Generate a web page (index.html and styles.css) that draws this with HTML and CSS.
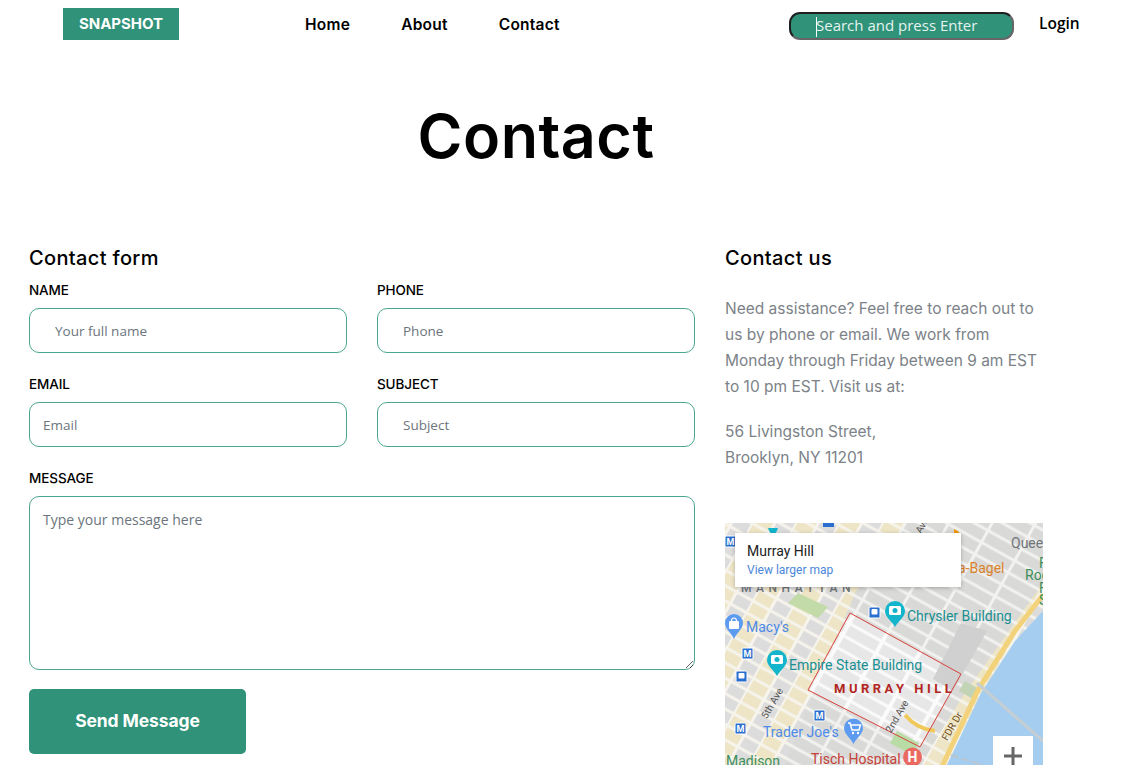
FILE: index.html
```html
<!DOCTYPE html>
<html lang="en">
<head>
<meta charset="utf-8">
<title>Contact - Snapshot</title>
<link rel="stylesheet" href="styles.css">
</head>
<body>
<header class="topbar">
  <a class="logo" href="#">SNAPSHOT</a>
  <nav class="menu">
    <a href="#">Home</a>
    <a href="#">About</a>
    <a href="#">Contact</a>
  </nav>
  <div class="search-wrap">
    <input class="search" type="text" placeholder="Search and press Enter">
    <span class="caret"></span>
  </div>
  <a class="login" href="#">Login</a>
</header>

<main>
  <h1 class="page-title">Contact</h1>
  <div class="columns">
    <section>
      <h2 class="section-title">Contact form</h2>
      <form class="form-grid">
        <div class="field">
          <label>NAME</label>
          <input class="indent" type="text" placeholder="Your full name">
        </div>
        <div class="field">
          <label>PHONE</label>
          <input class="indent" type="text" placeholder="Phone">
        </div>
        <div class="field">
          <label>EMAIL</label>
          <input type="text" placeholder="Email">
        </div>
        <div class="field">
          <label>SUBJECT</label>
          <input class="indent" type="text" placeholder="Subject">
        </div>
        <div class="field wide">
          <label>MESSAGE</label>
          <textarea placeholder="Type your message here"></textarea>
        </div>
        <button class="send" type="button">Send Message</button>
      </form>
    </section>
    <aside>
      <h2 class="section-title">Contact us</h2>
      <p class="copy first">Need assistance? Feel free to reach out to<br>us by phone or email. We work from<br>Monday through Friday between 9 am EST<br>to 10 pm EST. Visit us at:</p>
      <p class="copy">56 Livingston Street,<br>Brooklyn, NY 11201</p>
      <div class="map">
        <svg class="map-art" viewBox="0 0 318 300" width="318" height="300" xmlns="http://www.w3.org/2000/svg">
          <defs>
            <pattern id="blocks" width="38" height="13.500" patternUnits="userSpaceOnUse" patternTransform="translate(6 4) rotate(29)">
              <rect width="38" height="13.500" fill="#f6f4ec"/>
              <rect x="0" y="1.500" width="16" height="10.500" fill="#dcdcdc"/>
              <rect x="18" y="1.500" width="17" height="10.500" fill="#eee5c6"/>
            </pattern>
            <pattern id="greyblocks" width="38" height="13.500" patternUnits="userSpaceOnUse" patternTransform="translate(6 4) rotate(29)">
              <rect width="38" height="13.500" fill="#f2f2f0"/>
              <rect x="0" y="1.500" width="35" height="10.500" fill="#d9d9d7"/>
            </pattern>
            <pattern id="hillblocks" width="38" height="13.500" patternUnits="userSpaceOnUse" patternTransform="translate(6 4) rotate(29)">
              <rect width="38" height="13.500" fill="#fbfbfb"/>
              <rect x="0" y="1.500" width="34" height="10.500" fill="#e7e7e7"/>
            </pattern>
          </defs>
          <rect width="318" height="300" fill="url(#blocks)"/>
          <polygon points="180,0 318,0 318,60 240,170 190,250 120,300 20,300 60,240 130,70" fill="url(#greyblocks)"/>
          <polygon points="125,90 236,151 195,224 83,167" fill="url(#hillblocks)"/>
          <polygon points="73,70 103,84 93,95 63,80" fill="#c3dba8"/>
          <polygon points="172,208 194,220 187,232 165,220" fill="#b9dba6"/>
          <polygon points="240,158 254,166 248,176 234,168" fill="#c3d3b6"/>
          <path d="M236 100 L262 108 L228 168 L208 156Z" fill="#d0d0d0"/>
          <polygon points="318,88 290,118 256,170 222,242 222,300 318,300" fill="#a4cdf0"/>
          <path d="M318 72 L290 108 L253 167 L214 250" fill="none" stroke="#f2d27a" stroke-width="5"/>
          <path d="M252 160 L318 218" fill="none" stroke="#c5ced2" stroke-width="3"/>
          <path d="M226 232 L318 262" fill="none" stroke="#b9c6cf" stroke-width="2" stroke-dasharray="8 3"/>
          <path d="M180 192 Q192 206 210 208" fill="none" stroke="#f0c95c" stroke-width="4"/>
          <polygon points="125,90 236,151 195,224 83,167" fill="none" stroke="#d8423c" stroke-width="1"/>

          <text class="t-road" transform="translate(50 182) rotate(-60)">5th Ave</text>
          <text class="t-road" transform="translate(175 195) rotate(-60)">2nd Ave</text>
          <text class="t-fdr" transform="translate(230 205) rotate(-60)">FDR Dr</text>
          <text class="t-road" transform="translate(200 4) rotate(-60)">Ave</text>

          <text class="t-area" x="16" y="69">MANHATTAN</text>
          <text class="t-grey" x="286" y="25">Quee</text>
          <text class="t-green" x="314" y="45">F</text>
          <text class="t-green" x="300" y="57">Roc</text>
          <text class="t-green" x="314" y="70">F</text>
          <text class="t-green" x="314" y="82">S</text>
          <text class="t-orange" x="233" y="50">a-Bagel</text>
          <text class="t-teal" x="182" y="98">Chrysler Building</text>
          <text class="t-teal" x="64" y="147">Empire State Building</text>
          <text class="t-blue" x="21" y="109">Macy's</text>
          <text class="t-blue" x="38" y="214">Trader Joe's</text>
          <text class="t-red" x="86" y="241">Tisch Hospital</text>
          <text class="t-green" x="1" y="243">Madison</text>
          <text class="t-hill" x="109" y="170">MURRAY HILL</text>

          <g transform="translate(-10 7)"><path d="M52 130a10 10 0 0 1 20 0c0 6-6 9-10 16-4-7-10-10-10-16Z" fill="#12b5cb"/><rect x="56" y="125" width="12" height="9" rx="1.500" fill="#fff"/><circle cx="62" cy="129.500" r="2.500" fill="#12b5cb"/></g>
          <g transform="translate(0 6)"><path d="M160 82a10 10 0 0 1 20 0c0 6-6 9-10 16-4-7-10-10-10-16Z" fill="#12b5cb"/><rect x="164" y="77" width="12" height="9" rx="1.500" fill="#fff"/><circle cx="170" cy="81.500" r="2.500" fill="#12b5cb"/></g>
          <path d="M43 5 L53 5 C52 9 49 11 48 14 C47 11 44 9 43 5Z" fill="#12b5cb"/>
          <g><path d="M0 100a9 9 0 0 1 18 0c0 6-6 9-9 16-3-7-9-10-9-16Z" fill="#5c9bf0"/><rect x="4" y="98" width="10" height="8" rx="1" fill="#fff"/><path d="M6.500 98c0-4 5-4 5 0" fill="none" stroke="#fff" stroke-width="1.200"/></g>
          <g transform="translate(0 -2)"><path d="M119 207a9.500 9.500 0 0 1 19 0c0 6-6 9-9.500 16-3.500-7-9.500-10-9.500-16Z" fill="#5c9bf0"/><path d="M123 202h2l2 7h7l1.500-5H126" fill="none" stroke="#fff" stroke-width="1.500"/><circle cx="128" cy="212" r="1.200" fill="#fff"/><circle cx="133" cy="212" r="1.200" fill="#fff"/></g>
          <path d="M229 6a10 10 0 0 1 0 19Z" fill="#f29900"/>
          <circle cx="187.500" cy="234" r="9.500" fill="#ea6a62"/>
          <text class="t-h" x="187.500" y="239">H</text>

          <g class="metro"><rect x="0" y="13" width="11" height="11" rx="1.500"/><text x="5.500" y="22">M</text></g>
          <rect x="98" y="0" width="11" height="4" fill="#2a6fd0"/>
          <g class="metro"><rect x="17" y="125" width="11" height="11" rx="1.500"/><text x="22.500" y="134">M</text></g>
          <g class="metro"><rect x="89" y="187" width="11" height="11" rx="1.500"/><text x="94.500" y="196">M</text></g>
          <g class="metro"><rect x="10" y="200" width="11" height="11" rx="1.500"/><text x="15.500" y="209">M</text></g>
          <g class="metro"><rect x="144" y="84" width="11" height="11" rx="1.500"/><rect class="train" x="146.500" y="86" width="6" height="5.500" rx="1"/></g>
          <g class="metro"><rect x="11" y="148" width="11" height="11" rx="1.500"/><rect class="train" x="13.500" y="150" width="6" height="5.500" rx="1"/></g>
        </svg>
        <div class="map-card">
          <div class="map-place">Murray Hill</div>
          <a class="map-link" href="#">View larger map</a>
        </div>
        <div class="zoom-btn">
          <svg viewBox="0 0 18 18" width="18" height="18" xmlns="http://www.w3.org/2000/svg"><path d="M7.500 0h3v7.500H18v3h-7.500V18h-3v-7.500H0v-3h7.500Z" fill="#666"/></svg>
        </div>
      </div>
    </aside>
  </div>
</main>
</body>
</html>
```
FILE: styles.css
```css
html, body {
  margin: 0;
  height: 765px;
  overflow: hidden;
  background: #fff;
}
body {
  font-family: Inter, "Liberation Sans", sans-serif;
  color: #000;
}
a { text-decoration: none; color: inherit; }

.topbar {
  display: flex;
  align-items: center;
  height: 48px;
  padding-left: 63px;
}
.logo {
  box-sizing: border-box;
  width: 116px;
  height: 32px;
  line-height: 32px;
  text-align: center;
  background: #2f9279;
  color: #fff;
  font-size: 15px;
  font-weight: 700;
  letter-spacing: -0.05px;
}
.menu {
  display: flex;
  margin-left: 126px;
  width: 484px;
  gap: 51px;
  font-size: 15.500px;
  font-weight: 600;
  letter-spacing: 0.25px;
}
.search-wrap { position: relative; margin-top: 4px; }
.search {
  display: block;
  box-sizing: border-box;
  width: 225px;
  height: 28px;
  padding: 0 0 2px 25px;
  border: 2px solid;
  border-color: #1f1f1f #666 #666 #1f1f1f;
  border-radius: 11px;
  background: #2f9279;
  color: #fff;
  font-family: "Open Sans", sans-serif;
  font-size: 15px;
}
.search::placeholder { color: #e6f3ef; opacity: 1; }
.caret {
  position: absolute;
  left: 27px;
  top: 5px;
  width: 1px;
  height: 20px;
  background: #fff;
}
.login {
  margin: -2px 0 0 25px;
  font-family: "Open Sans", sans-serif;
  font-size: 15.500px;
  font-weight: 600;
}

.page-title {
  margin: 48px 55px 0 0;
  height: 80px;
  line-height: 80px;
  text-align: center;
  font-size: 61px;
  font-weight: 600;
  letter-spacing: 0.5px;
}
.columns {
  display: grid;
  grid-template-columns: 666px 318px;
  column-gap: 30px;
  padding: 71px 0 0 29px;
}
.section-title {
  margin: 0;
  height: 22px;
  line-height: 22px;
  font-size: 20px;
  font-weight: 500;
  letter-spacing: 0.35px;
}
.form-grid {
  display: grid;
  grid-template-columns: 318px 318px;
  column-gap: 30px;
  margin-top: 10px;
}
.field { display: flex; flex-direction: column; margin-bottom: 20px; }
.field.wide { grid-column: 1 / -1; margin-bottom: 19px; }
.field label {
  height: 22px;
  line-height: 22px;
  margin-bottom: 7px;
  font-size: 13.500px;
  font-weight: 500;
  letter-spacing: -0.1px;
}
.field input, .field textarea {
  box-sizing: border-box;
  width: 100%;
  height: 45px;
  border: 1px solid #4aa78f;
  border-radius: 10px;
  padding: 0 13px;
  background: #fff;
  font-family: "Open Sans", sans-serif;
  font-size: 13.500px;
  color: #333;
}
.field input.indent { padding-left: 25px; }
.field textarea {
  display: block;
  height: 174px;
  padding: 13px 13px;
  font-size: 14px;
  resize: vertical;
}
.field input::placeholder, .field textarea::placeholder { color: #6c757d; opacity: 1; }
.send {
  grid-column: 1;
  width: 217px;
  height: 65px;
  padding-bottom: 3px;
  border: 0;
  border-radius: 5px;
  background: #2f9279;
  color: #fff;
  font-family: Inter, sans-serif;
  font-size: 17.500px;
  font-weight: 700;
  letter-spacing: -0.1px;
}
.copy {
  margin: 0;
  font-size: 15.500px;
  line-height: 26px;
  color: #7c8288;
  white-space: nowrap;
}
.copy.first { margin-top: 27px; margin-bottom: 19px; }
.map {
  position: relative;
  width: 318px;
  height: 300px;
  margin-top: 52px;
  overflow: hidden;
}
.map-art { display: block; }
.map-art text { font-family: Roboto, sans-serif; font-size: 14px; }
.map-art .t-teal { fill: #1a8f93; }
.map-art .t-blue { fill: #4d8be8; }
.map-art .t-red { fill: #c5423a; }
.map-art .t-green { fill: #3c8f5a; }
.map-art .t-orange { fill: #d9822b; }
.map-art .t-grey { fill: #70757a; }
.map-art .t-area { fill: #70757a; font-size: 12px; letter-spacing: 4.500px; font-weight: 500; }
.map-art .t-hill { fill: #b3261e; font-size: 13px; font-weight: 700; letter-spacing: 3.500px; }
.map-art .t-road { fill: #555; font-size: 10px; text-anchor: middle; }
.map-art .t-fdr { fill: #6b4a10; font-size: 10px; text-anchor: middle; }
.map-art .t-h { fill: #fff; font-size: 14px; font-weight: 700; text-anchor: middle; }
.map-art .metro rect { fill: #2a6fd0; stroke: #fff; stroke-width: 1; }
.map-art .metro rect.train { fill: #fff; stroke: none; }
.map-art .metro text { fill: #fff; font-size: 9px; font-weight: 700; text-anchor: middle; }
.map-card {
  position: absolute;
  left: 10px;
  top: 10px;
  box-sizing: border-box;
  width: 226px;
  height: 54px;
  padding: 9px 12px;
  background: #fff;
  box-shadow: 0 1px 4px rgba(0, 0, 0, 0.25);
  font-family: Roboto, sans-serif;
}
.map-place { font-size: 14px; line-height: 18px; font-weight: 400; color: #222; }
.map-link { display: block; margin-top: 2px; font-size: 12px; line-height: 16px; color: #4a86d8; }
.zoom-btn {
  position: absolute;
  left: 268px;
  top: 213px;
  display: flex;
  justify-content: center;
  align-items: center;
  width: 40px;
  height: 40px;
  background: #fff;
}
```
